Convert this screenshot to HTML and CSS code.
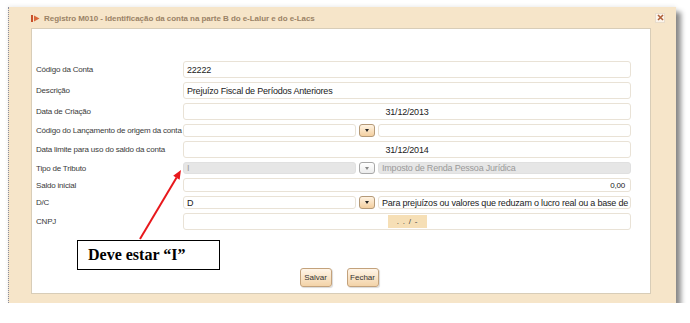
FILE: index.html
```html
<!DOCTYPE html>
<html lang="pt">
<head>
    <meta charset="UTF-8">
    <title>Registro M010</title>
    <link rel="stylesheet" href="styles.css">
</head>
<body>
    <div class="dialog">
        <div class="titlebar">
            <svg class="ticon" width="9" height="7" viewBox="0 0 9 7">
                <rect x="0" y="0" width="2" height="7" fill="#c8502a"/>
                <polygon points="3,0.5 8.5,3.5 3,6.5" fill="#d9683a"/>
            </svg>
            <span class="title">Registro M010 - Identificação da conta na parte B do e-Lalur e do e-Lacs</span>
            <span class="close">
                <svg width="7" height="7" viewBox="0 0 7 7">
                    <path d="M1 1 L6 6 M6 1 L1 6" stroke="#b0603a" stroke-width="1.6"/>
                </svg>
            </span>
        </div>
        <div class="panel">
            <div class="form">
                <div class="lbl">Código da Conta</div>
                <div class="box">22222</div>

                <div class="lbl">Descrição</div>
                <div class="box">Prejuízo Fiscal de Períodos Anteriores</div>

                <div class="lbl">Data de Criação</div>
                <div class="box center">31/12/2013</div>

                <div class="lbl">Código do Lançamento de origem da conta</div>
                <div class="combo">
                    <div class="box"></div>
                    <div class="drop"><span class="tri"></span></div>
                    <div class="box"></div>
                </div>

                <div class="lbl">Data limite para uso do saldo da conta</div>
                <div class="box center">31/12/2014</div>

                <div class="lbl">Tipo de Tributo</div>
                <div class="combo dis">
                    <div class="box">I</div>
                    <div class="drop"><span class="tri"></span></div>
                    <div class="box">Imposto de Renda Pessoa Jurídica</div>
                </div>

                <div class="lbl">Saldo inicial</div>
                <div class="box right mid">0,00</div>

                <div class="lbl">D/C</div>
                <div class="combo">
                    <div class="box">D</div>
                    <div class="drop"><span class="tri"></span></div>
                    <div class="box">Para prejuízos ou valores que reduzam o lucro real ou a base de</div>
                </div>

                <div class="lbl">CNPJ</div>
                <div class="box center"><span class="mask">. &nbsp;. &nbsp;/ &nbsp;-</span></div>
            </div>
            <div class="actions">
                <button class="btn">Salvar</button>
                <button class="btn">Fechar</button>
            </div>
        </div>
    </div>

    <div class="note">Deve estar “I”</div>
    <svg class="arrow" width="690" height="323" viewBox="0 0 690 323">
        <line x1="140" y1="239" x2="176.6" y2="177.5" stroke="#e8181c" stroke-width="2"/>
        <polygon points="181,170 179.6,179.8 173.2,175.8" fill="#e8181c"/>
    </svg>
</body>
</html>
```

FILE: styles.css
```css
html, body {
    margin: 0;
    padding: 0;
    background-color: #fff;
    font-family: "Liberation Sans", Arial, sans-serif;
}
.dialog {
    position: relative;
    margin: 7px 0 0 8px;
    width: 667px;
    height: 296px;
    background-color: #f6e5c9;
    border-left: 1px dotted #8a8ea0;
    box-shadow: 5px 5px 5px rgba(0, 0, 0, 0.45), 0 -1px 4px rgba(0, 0, 0, 0.08);
    display: flex;
    flex-direction: column;
}
.titlebar {
    height: 21px;
    display: flex;
    align-items: center;
    padding-left: 22px;
    padding-right: 11px;
}
.ticon {
    margin-right: 4px;
    margin-top: 1px;
}
.title {
    flex: 1;
    font-size: 8px;
    font-weight: bold;
    letter-spacing: -0.05px;
    color: #9a8266;
    padding-top: 1px;
}
.close {
    width: 8px;
    height: 8px;
    border: 1px solid #e8dccb;
    background-color: #fbf4ea;
    display: flex;
    align-items: center;
    justify-content: center;
}
.panel {
    flex: 1;
    margin: 0 25px 9px 22px;
    background-color: #fff;
    border: 1px solid #d8cdb8;
    padding: 32px 19px 0 4px;
}
.form {
    display: grid;
    grid-template-columns: 147px 1fr;
    grid-template-rows: 17px 17px 17px 13px 17px 12px 14px 13px 17px;
    row-gap: 4px;
    align-items: center;
}
.lbl {
    font-size: 8px;
    letter-spacing: -0.2px;
    color: #3a3a3a;
    white-space: nowrap;
}
.box {
    box-sizing: border-box;
    height: 100%;
    border: 1px solid #e9e2d6;
    border-radius: 3px;
    background-color: #fff;
    font-size: 9px;
    letter-spacing: -0.2px;
    color: #222;
    padding: 0 3px;
    display: flex;
    align-items: center;
    white-space: nowrap;
    overflow: hidden;
}
.center {
    justify-content: center;
}
.right {
    justify-content: flex-end;
}
.mid {
    font-size: 8px;
    padding-right: 5px;
}
.combo {
    height: 100%;
    display: grid;
    grid-template-columns: 173px 16px 1fr;
    column-gap: 3px;
}
.drop {
    box-sizing: border-box;
    height: 100%;
    border: 1px solid #b59a78;
    border-radius: 3px;
    background: linear-gradient(#fff3e2, #f3cfa0);
    display: flex;
    align-items: center;
    justify-content: center;
}
.tri {
    width: 0;
    height: 0;
    border-left: 2.5px solid transparent;
    border-right: 2.5px solid transparent;
    border-top: 3px solid #222;
}
.dis .box {
    background-color: #e6e6e6;
    border-color: #e0e0e0;
    color: #9a9a9a;
}
.dis .drop {
    background: linear-gradient(#ffffff, #ececec);
    border-color: #a8a8a8;
}
.dis .tri {
    border-top-color: #888;
}
.mask {
    background-color: #f6dfb6;
    width: 39px;
    height: 13px;
    font-size: 8px;
    display: flex;
    align-items: center;
    justify-content: center;
    color: #444;
}
.actions {
    display: flex;
    justify-content: center;
    gap: 15px;
    margin-top: 38px;
    padding-left: 11px;
}
.btn {
    width: 32px;
    height: 19px;
    padding: 0;
    border: 1px solid #c3a27c;
    border-radius: 3px;
    background: linear-gradient(#fff5e8, #f3d3a8);
    font-family: "Liberation Sans", Arial, sans-serif;
    font-size: 8px;
    color: #333;
    box-shadow: 1px 1px 1px rgba(0, 0, 0, 0.15);
}
.note {
    position: absolute;
    left: 77px;
    top: 240px;
    width: 131px;
    height: 28px;
    border: 1px solid #000;
    background-color: #fff;
    padding-left: 10px;
    font-family: "Liberation Serif", "Times New Roman", serif;
    font-weight: bold;
    font-size: 16px;
    line-height: 28px;
    color: #000;
}
.arrow {
    position: absolute;
    left: 0;
    top: 0;
    pointer-events: none;
}
```
